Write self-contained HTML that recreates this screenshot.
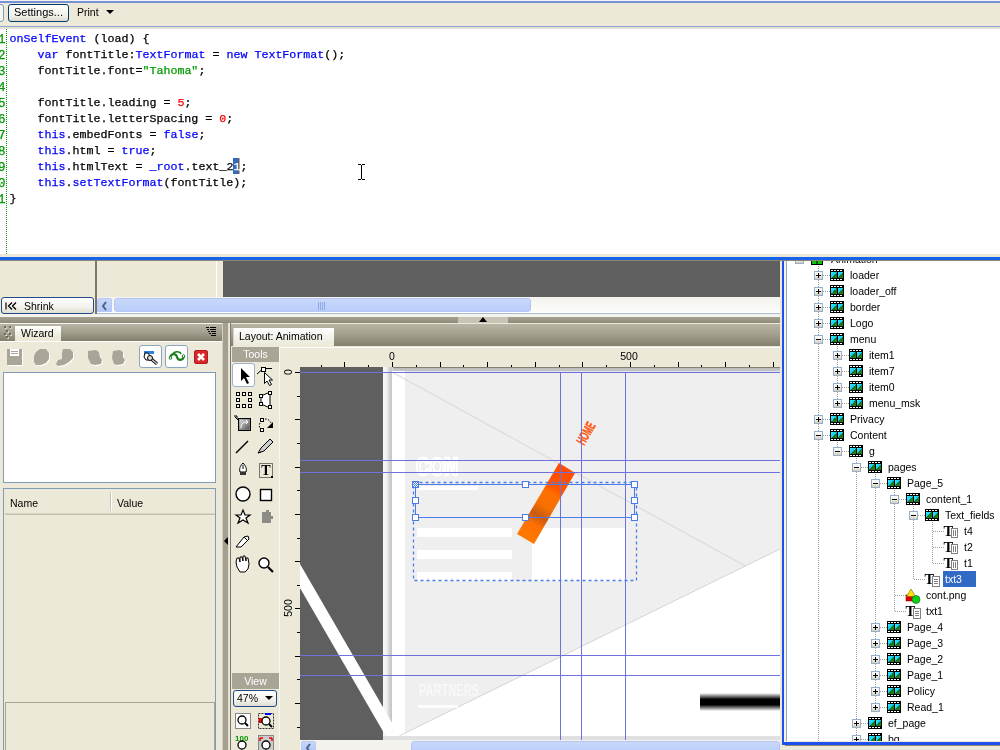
<!DOCTYPE html>
<html><head><meta charset="utf-8">
<style>
*{margin:0;padding:0;box-sizing:border-box}
html,body{width:1000px;height:750px;overflow:hidden;background:#ECE9D8;font-family:"Liberation Sans",sans-serif;font-size:10.5px;color:#000}
.a{position:absolute}
#code{font-family:"Liberation Mono",monospace;font-size:11.67px;line-height:16px;white-space:pre;-webkit-text-stroke:0.25px currentColor}
.k{color:#0000FF}.s{color:#009900}.n{color:#FF0000}
.ln{color:#009900}
</style></head><body><div id="wrap" style="position:absolute;left:0;top:0;width:1000px;height:750px;will-change:transform">
<!-- top toolbar -->
<div class="a" style="left:0;top:0;width:1000px;height:1px;background:#F4F3EE"></div>
<div class="a" style="left:0;top:1px;width:1000px;height:2px;background:#7592D8"></div>
<div class="a" style="left:0;top:3px;width:1000px;height:23px;background:#ECE9D8"></div>
<div class="a" style="left:-10px;top:4px;width:14px;height:18px;border:1px solid #7F9DB9;border-radius:3px;background:#F6F5F0"></div>
<div class="a" style="left:8px;top:4px;width:61px;height:18px;border:1px solid #003C74;border-radius:3px;background:linear-gradient(#FFFFFF,#F0EFE8 70%,#DCD9CC);font-size:11px;line-height:15px;text-align:center">Settings...</div>
<div class="a" style="left:77px;top:5px;font-size:10.5px;line-height:15px">Print</div>
<div class="a" style="left:106px;top:10px;width:0;height:0;border-left:4px solid transparent;border-right:4px solid transparent;border-top:4px solid #000"></div>
<div class="a" style="left:0;top:26px;width:1000px;height:1px;background:#8FA5D0"></div>
<div class="a" style="left:0;top:27px;width:1000px;height:2px;background:#E4E2D8"></div>
<!-- code area -->
<div class="a" style="left:0;top:29px;width:1000px;height:225px;background:#FFFFFF"></div>
<div class="a" style="left:6px;top:29px;width:1px;height:225px;background-image:linear-gradient(#009900 50%,transparent 50%);background-size:1px 2px"></div>
<div class="a ln" id="code" style="left:-2px;top:32px;color:#009900;font-size:12.5px">1
2
3
4
5
6
7
8
9
0
1</div>
<div class="a" style="left:233px;top:158px;width:6px;height:16px;background:#316AC5"></div><div class="a" style="left:239px;top:158px;width:1px;height:16px;background:#E8A040"></div>
<div class="a" id="code" style="left:9.5px;top:30.5px"><span class="k">onSelfEvent</span> (load) {
    <span class="k">var</span> fontTitle:<span class="k">TextFormat</span> = <span class="k">new</span> <span class="k">TextFormat</span>();
    fontTitle.font=<span class="s">"Tahoma"</span>;

    fontTitle.leading = <span class="n">5</span>;
    fontTitle.letterSpacing = <span class="n">0</span>;
    <span class="k">this</span>.embedFonts = <span class="k">false</span>;
    <span class="k">this</span>.html = <span class="k">true</span>;
    <span class="k">this</span>.htmlText = <span class="k">_root</span>.text_2<span style="color:#fff">1</span>;
    <span class="k">this</span>.<span class="k">setTextFormat</span>(fontTitle);
}</div>
<svg class="a" style="left:356px;top:162px" width="12" height="20"><path d="M2 2.5h3M6 2.5h3M2 17.5h3M6 17.5h3" stroke="#000"/><path d="M5.5 3V17" stroke="#000"/></svg>
<!-- splitter between code and panels -->
<div class="a" style="left:0;top:254px;width:1000px;height:3px;background:#ECE9D8"></div>
<div class="a" style="left:0;top:257px;width:1000px;height:3px;background:#1662EA"></div>
<div class="a" style="left:0;top:260px;width:1000px;height:1px;background:#8C8878"></div>

<!-- mid strip -->
<div class="a" style="left:0;top:261px;width:95px;height:55px;background:#ECE9D8"></div>
<div class="a" style="left:95px;top:261px;width:2px;height:55px;background:#7A776B"></div>
<div class="a" style="left:216px;top:261px;width:1px;height:36px;background:#FFFFFF"></div>
<div class="a" style="left:223px;top:261px;width:557px;height:36px;background:#5F5F5F"></div>
<div class="a" style="left:97px;top:297px;width:683px;height:17px;background:linear-gradient(#F3F2EC,#FDFDFB)"></div>
<div class="a" style="left:1px;top:297px;width:93px;height:17px;border:1px solid #1F4C88;border-radius:3px;background:linear-gradient(#FFFFFF,#F3F2EC 60%,#E0DED2)"></div>
<svg class="a" style="left:5px;top:302px" width="14" height="8"><path d="M1 0.5V7.5" stroke="#000" stroke-width="1.2"/><path d="M7 0.5L3.5 4L7 7.5M11 0.5L7.5 4L11 7.5" stroke="#000" stroke-width="1.3" fill="none"/></svg>
<div class="a" style="left:24px;top:299px;font-size:10.5px;line-height:14px">Shrink</div>
<div class="a" style="left:97px;top:298px;width:15px;height:15px;border:1px solid #B7C8F4;border-radius:2px;background:linear-gradient(#C8D7FB,#B1C7F7)"></div>
<svg class="a" style="left:100px;top:301px" width="10" height="10"><path d="M6 1 L3 5 L6 9" stroke="#4D6185" stroke-width="2" fill="none"/></svg>
<div class="a" style="left:114px;top:298px;width:417px;height:14px;border:1px solid #B4C6F4;border-radius:3px;background:linear-gradient(#C9D8FC,#B9CDF9)"></div>
<svg class="a" style="left:318px;top:302px" width="8" height="8"><path d="M0.5 0V8M2.5 0V8M4.5 0V8M6.5 0V8" stroke="#8FA8E8" stroke-width="1"/></svg>
<div class="a" style="left:97px;top:312px;width:683px;height:1px;background:#FFFFFF"></div><div class="a" style="left:97px;top:313px;width:683px;height:1px;background:#A9B9D8"></div><div class="a" style="left:0;top:314px;width:780px;height:3px;background:#F4F3EE"></div>
<div class="a" style="left:0;top:317px;width:780px;height:6px;background:linear-gradient(#A5A190,#8F8B7A)"></div>
<div class="a" style="left:458px;top:317px;width:50px;height:6px;background:#C7C4B5"></div>
<div class="a" style="left:479px;top:317px;width:0;height:0;border-left:4px solid transparent;border-right:4px solid transparent;border-bottom:5px solid #000"></div>
<div class="a" style="left:0;top:323px;width:780px;height:1px;background:#F4F3EE"></div>

<!-- wizard panel -->
<div class="a" style="left:0;top:324px;width:222px;height:17px;background:linear-gradient(#B9B5A5,#A29E8D 50%,#837F6D)"></div>
<svg class="a" style="left:3px;top:326px" width="11" height="14"><g fill="#D8D5C8"><rect x="2" y="1" width="2" height="2"/><rect x="7" y="1" width="2" height="2"/><rect x="4" y="5" width="2" height="2"/><rect x="2" y="8" width="2" height="2"/><rect x="7" y="8" width="2" height="2"/><rect x="4" y="11" width="2" height="2"/></g><g fill="#6E6B5E"><rect x="1" y="0" width="2" height="2"/><rect x="6" y="0" width="2" height="2"/><rect x="3" y="4" width="2" height="2"/><rect x="1" y="7" width="2" height="2"/><rect x="6" y="7" width="2" height="2"/><rect x="3" y="10" width="2" height="2"/></g></svg>
<div class="a" style="left:15px;top:326px;width:46px;height:16px;background:linear-gradient(#FFFFFF,#ECE9D8 70%);font-size:10.5px;line-height:14px;padding-left:6px">Wizard</div>
<svg class="a" style="left:206px;top:327px" width="11" height="10"><g fill="#000"><rect x="0" y="0" width="3" height="1"/><rect x="4" y="0" width="6" height="1"/><rect x="1" y="2" width="2" height="1"/><rect x="4" y="2" width="6" height="1"/><rect x="2" y="4" width="2" height="1"/><rect x="5" y="4" width="5" height="1"/><rect x="3" y="6" width="2" height="1"/><rect x="6" y="6" width="4" height="1"/><rect x="5" y="8" width="5" height="1"/></g></svg>
<div class="a" style="left:0;top:341px;width:222px;height:1px;background:#FFFFFF"></div>
<!-- wizard toolbar icons (disabled) -->
<svg class="a" style="left:6px;top:348px" width="122" height="19">
<g fill="#FFFFFF" transform="translate(1,1)">
<path d="M1 1h15v16h-15z"/>
<path d="M30 4l4-3 6 0 3 4 0 6-3 4-5 2-5 0-2-3 0-6z"/>
<path d="M57 1l7 0 3 3 0 6-4 4-5 3-6 1-2-2 2-4 4-1 0-6z"/>
<path d="M82 3l8-1 3 2 1 5 2 3-1 4-6 1-4-1-3-6z"/>
<path d="M107 3l7-1 3 2 0 5 2 3-2 4-6 1-3-1-2-6z"/>
</g>
<g fill="#A8A698">
<path d="M1 1h15v16h-15z"/>
<path d="M30 4l4-3 6 0 3 4 0 6-3 4-5 2-5 0-2-3 0-6z"/>
<path d="M57 1l7 0 3 3 0 6-4 4-5 3-6 1-2-2 2-4 4-1 0-6z"/>
<path d="M82 3l8-1 3 2 1 5 2 3-1 4-6 1-4-1-3-6z"/>
<path d="M107 3l7-1 3 2 0 5 2 3-2 4-6 1-3-1-2-6z"/>
</g>
<rect x="4" y="1" width="9" height="7" fill="#FFFFFF"/><path d="M5 3.5h7M5 5.5h7" stroke="#A8A698" stroke-width="1"/></svg>
<div class="a" style="left:139px;top:345px;width:23px;height:23px;border:1px solid #8CA4C4;border-radius:3px;background:#FFFFFF"></div>
<svg class="a" style="left:142px;top:349px" width="18" height="16"><path d="M2 2h10v3h-10z" fill="#2F7FDF"/><path d="M3 4l3 0 2 3-1 4-3 0-2-3z" fill="#fff" stroke="#000" stroke-width="1"/><path d="M7 8l8 7" stroke="#000" stroke-width="3"/><path d="M7 8l8 7" stroke="#C8C8C8" stroke-width="1.5"/><circle cx="8" cy="9" r="2.5" fill="#ddd" stroke="#000"/></svg>
<div class="a" style="left:165px;top:345px;width:23px;height:23px;border:1px solid #8CA4C4;border-radius:3px;background:#FFFFFF"></div>
<svg class="a" style="left:168px;top:349px" width="18" height="16"><path d="M2 9 C3 4, 8 4, 9 8 C10 12, 15 12, 16 7" stroke="#1F7F1F" stroke-width="2.2" fill="none"/><path d="M5 5 C6 2, 12 2, 13 5" stroke="#1F7F1F" stroke-width="1.5" fill="none"/><circle cx="2.5" cy="9" r="1.3" fill="#fff" stroke="#1F7F1F"/><circle cx="15.5" cy="7" r="1.3" fill="#fff" stroke="#1F7F1F"/></svg>
<div class="a" style="left:194px;top:350px;width:14px;height:14px;background:#D8262A;border:1px solid #B01A1A;border-radius:2px"></div>
<svg class="a" style="left:194px;top:350px" width="14" height="14"><path d="M4 4L10 10M10 4L4 10" stroke="#fff" stroke-width="2.6"/></svg>
<div class="a" style="left:3px;top:372px;width:213px;height:111px;background:#FFFFFF;border:1px solid #7F9DB9"></div>
<div class="a" style="left:3px;top:488px;width:213px;height:270px;background:#ECE9D8;border:1px solid #7F9DB9"></div>
<div class="a" style="left:5px;top:490px;width:210px;height:23px;background:#ECE9D8"></div>
<div class="a" style="left:5px;top:513px;width:210px;height:1px;background:#D6D2C2"></div>
<div class="a" style="left:5px;top:514px;width:210px;height:1px;background:#C5C1B0"></div>
<div class="a" style="left:110px;top:492px;width:1px;height:19px;background:#C9C5B4"></div>
<div class="a" style="left:111px;top:492px;width:1px;height:19px;background:#FFFFFF"></div>
<div class="a" style="left:10px;top:496px;font-size:10.5px;line-height:14px">Name</div>
<div class="a" style="left:117px;top:496px;font-size:10.5px;line-height:14px">Value</div>
<div class="a" style="left:5px;top:702px;width:210px;height:60px;border:1px solid #A9A690;background:#ECE9D8"></div>
<!-- splitter -->
<div class="a" style="left:222px;top:323px;width:1px;height:427px;background:#D2CEC0"></div>
<div class="a" style="left:223px;top:323px;width:5px;height:427px;background:#A59F90"></div>
<div class="a" style="left:228px;top:323px;width:1px;height:427px;background:#E2DFD3"></div>
<div class="a" style="left:224px;top:537px;width:0;height:0;border-top:4px solid transparent;border-bottom:4px solid transparent;border-right:4px solid #000"></div>

<!-- layout panel -->
<div class="a" style="left:229px;top:323px;width:551px;height:427px;background:#ECE9D8"></div>
<div class="a" style="left:230px;top:323px;width:1px;height:427px;background:#7B7869"></div>
<div class="a" style="left:231px;top:324px;width:549px;height:22px;background:linear-gradient(#B9B5A5,#A29E8D 50%,#837F6D)"></div>
<div class="a" style="left:233px;top:328px;width:101px;height:18px;background:linear-gradient(#FFFFFF,#F1EFE6 60%,#ECE9D8);font-size:10.5px;line-height:16px;padding-left:5px;border-left:1px solid #D8D5C8">Layout: Animation</div>
<div class="a" style="left:231px;top:346px;width:549px;height:1px;background:#ECE9D8"></div>
<div class="a" style="left:232px;top:347px;width:47px;height:15px;background:#A8A595;color:#FFFFFF;font-size:10.5px;line-height:15px;text-align:center">Tools</div>
<div class="a" style="left:279px;top:347px;width:1px;height:403px;background:#F8F7F3"></div>
<div class="a" style="left:232px;top:363px;width:23px;height:24px;background:#FFFFFF;border:1px solid #9DB0CC;border-radius:3px"></div>
<svg class="a" style="left:232px;top:362px" width="48" height="216">
<!-- select arrow -->
<path d="M9 6 L9 19 L12 16 L15 22 L17 21 L14 15 L18 15 Z" fill="#000"/>
<!-- subselect -->
<rect x="29.5" y="5.5" width="4" height="4" fill="#fff" stroke="#000"/><path d="M25 12L29.5 8M33.5 6.5H40" stroke="#000"/>
<path d="M32.5 10.5 L32.5 21.5 L35 19 L37.5 23.5 L39.5 22.5 L37 18 L40.5 18 Z" fill="#fff" stroke="#000" stroke-width="1"/>
<!-- freetransform dotted rect -->
<g fill="#fff" stroke="#000" stroke-width="1"><rect x="4.5" y="30.5" width="3" height="3"/><rect x="10.5" y="30.5" width="3" height="3"/><rect x="16.5" y="30.5" width="3" height="3"/><rect x="4.5" y="36.5" width="3" height="3"/><rect x="16.5" y="36.5" width="3" height="3"/><rect x="4.5" y="42.5" width="3" height="3"/><rect x="10.5" y="42.5" width="3" height="3"/><rect x="16.5" y="42.5" width="3" height="3"/></g>
<!-- distort -->
<path d="M29 34 L38 30 L38 46 L29 42 Z" fill="#fff" stroke="#000"/>
<g fill="#fff" stroke="#000"><rect x="27.5" y="32.5" width="3" height="3"/><rect x="27.5" y="40.5" width="3" height="3"/><rect x="36.5" y="29.5" width="3" height="3"/><rect x="36.5" y="43.5" width="3" height="3"/></g>
<!-- scale -->
<path d="M3 55 L6 58" stroke="#000"/><path d="M2 54h3v3" fill="none" stroke="#000"/>
<rect x="6.5" y="56.5" width="12" height="12" fill="#888" stroke="#000"/><rect x="7.5" y="57.5" width="10" height="10" fill="url(#g1)"/>
<path d="M9 66 C9 61, 12 60, 15 60" stroke="#fff" fill="none"/><path d="M14 58l2 2-2 2" stroke="#fff" fill="none"/>
<defs><linearGradient id="g1" x1="0" y1="0" x2="1" y2="1"><stop offset="0" stop-color="#ddd"/><stop offset="1" stop-color="#555"/></linearGradient></defs>
<!-- rotate -->
<rect x="28.5" y="56.5" width="3" height="3" fill="#fff" stroke="#000"/><rect x="28.5" y="66.5" width="3" height="3" fill="#fff" stroke="#000"/>
<path d="M33 57 C37 57, 38 59, 39 61" stroke="#000" stroke-dasharray="1.5 1.5" fill="none"/><path d="M28 61 C27 63, 27 65, 28 66" stroke="#000" stroke-dasharray="1.5 1.5" fill="none"/><path d="M35 66 L41 60 L41 66 Z" fill="#000"/>
<!-- line -->
<path d="M4 91 L16 79" stroke="#000" stroke-width="1.5"/>
<!-- pencil -->
<path d="M26 91 L29 86 L38 77 L41 80 L32 89 Z" fill="#ccc" stroke="#000"/><path d="M26 91l3-1" stroke="#000"/>
<!-- pen -->
<path d="M11 101 C14 104, 15 107, 14 110 L8 110 C7 107, 8 104, 11 101 Z" fill="#fff" stroke="#000"/><rect x="8" y="110" width="6" height="3" fill="#333"/><path d="M11 103v4" stroke="#000"/>
<!-- text -->
<rect x="27.5" y="101.5" width="13" height="14" fill="none" stroke="#000" stroke-dasharray="1 1"/>
<text x="34" y="113" font-family="Liberation Serif" font-weight="bold" font-size="14" text-anchor="middle">T</text>
<rect x="39" y="114" width="2" height="2" fill="#000"/>
<!-- circle -->
<circle cx="11" cy="132" r="7" fill="#fff" stroke="#000" stroke-width="1.4"/>
<!-- square -->
<rect x="28.5" y="127.5" width="11" height="11" fill="#fff" stroke="#000" stroke-width="1.4"/>
<!-- star -->
<path d="M11 148 L13 153 L18 153 L14 156 L16 161 L11 158 L6 161 L8 156 L4 153 L9 153 Z" fill="#fff" stroke="#000" stroke-width="1.2"/>
<!-- puzzle -->
<path d="M30 150h4v-2h3v2h2v4h2v3h-2v4h-9z" fill="#8C8B85"/>
<!-- knife -->
<path d="M4 185 L12 175 L16 174 L17 177 L9 185 Z" fill="#fff" stroke="#000"/><path d="M12 175 L16 179" stroke="#000"/>
<!-- hand -->
<path d="M5 205 L4 200 L5 196 L7 196 L8 200 L8 195 L10 195 L11 199 L11 194 L13 194 L14 199 L14 196 L16 196 L17 202 L16 207 L13 210 L8 210 Z" fill="#fff" stroke="#000"/>
<!-- magnifier -->
<circle cx="32" cy="201" r="5" fill="#fff" stroke="#000" stroke-width="1.4"/><path d="M36 205 L41 210" stroke="#000" stroke-width="2.2"/>
</svg>
<!-- view section -->
<div class="a" style="left:232px;top:673px;width:47px;height:16px;background:#A8A595;color:#FFFFFF;font-size:10.5px;line-height:16px;text-align:center">View</div>
<div class="a" style="left:233px;top:690px;width:44px;height:17px;border:1px solid #1F4C88;border-radius:3px;background:linear-gradient(#FFFFFF,#F3F2EC 60%,#E0DED2);font-size:10.5px;line-height:15px;padding-left:3px">47%</div>
<div class="a" style="left:265px;top:696px;width:0;height:0;border-left:4px solid transparent;border-right:4px solid transparent;border-top:4px solid #000"></div>
<svg class="a" style="left:232px;top:710px" width="48" height="40">
<rect x="3.5" y="3.5" width="15" height="15" fill="#fff" stroke="#888"/><circle cx="10" cy="10" r="4" fill="#fff" stroke="#000" stroke-width="1.3"/><path d="M13 13 L16 16" stroke="#000" stroke-width="2"/>
<rect x="26.5" y="3.5" width="15" height="15" fill="none" stroke="#333" stroke-dasharray="2 1"/><rect x="27" y="8" width="6" height="5" fill="#E00"/><path d="M33 4h6" stroke="#00F" stroke-width="2"/><circle cx="34" cy="11" r="4" fill="#fff" stroke="#000" stroke-width="1.3"/><path d="M37 14 L40 17" stroke="#000" stroke-width="2"/>
<text x="3" y="31" font-family="Liberation Sans" font-weight="bold" font-size="8" fill="#090">100</text><circle cx="10" cy="35" r="4" fill="#fff" stroke="#000" stroke-width="1.3"/>
<rect x="26.5" y="25.5" width="15" height="15" fill="#ccc" stroke="#888"/><path d="M28 28l3 0M28 28l0 3M40 28l-3 0M40 28l0 3" stroke="#E00" stroke-width="1.5"/><circle cx="34" cy="35" r="4" fill="#fff" stroke="#000" stroke-width="1.3"/>
</svg>

<!-- rulers -->
<div class="a" style="left:280px;top:347px;width:500px;height:21px;background:#ECE9D8"></div><div class="a" style="left:280px;top:347px;width:500px;height:1px;background:#FFFFFF"></div>
<svg class="a" style="left:280px;top:347px" width="500" height="22"><path d="M41.5 18V21" stroke="#000"/><path d="M64.5 15V21" stroke="#000"/><path d="M88.5 18V21" stroke="#000"/><path d="M112.5 15V21" stroke="#000"/><path d="M136.5 18V21" stroke="#000"/><path d="M160.5 15V21" stroke="#000"/><path d="M183.5 18V21" stroke="#000"/><path d="M207.5 15V21" stroke="#000"/><path d="M231.5 18V21" stroke="#000"/><path d="M255.5 15V21" stroke="#000"/><path d="M279.5 18V21" stroke="#000"/><path d="M302.5 15V21" stroke="#000"/><path d="M326.5 18V21" stroke="#000"/><path d="M350.5 15V21" stroke="#000"/><path d="M374.5 18V21" stroke="#000"/><path d="M398.5 15V21" stroke="#000"/><path d="M421.5 18V21" stroke="#000"/><path d="M445.5 15V21" stroke="#000"/><path d="M469.5 18V21" stroke="#000"/><path d="M493.5 15V21" stroke="#000"/>
<text x="112" y="13" font-family="Liberation Sans" font-size="10.5" text-anchor="middle">0</text>
<text x="349" y="13" font-family="Liberation Sans" font-size="10.5" text-anchor="middle">500</text></svg>
<svg class="a" style="left:280px;top:368px" width="20" height="372"><path d="M15 4.5H20" stroke="#000"/><path d="M17 28.5H20" stroke="#000"/><path d="M15 51.5H20" stroke="#000"/><path d="M17 75.5H20" stroke="#000"/><path d="M15 99.5H20" stroke="#000"/><path d="M17 122.5H20" stroke="#000"/><path d="M15 146.5H20" stroke="#000"/><path d="M17 170.5H20" stroke="#000"/><path d="M15 193.5H20" stroke="#000"/><path d="M17 217.5H20" stroke="#000"/><path d="M15 240.5H20" stroke="#000"/><path d="M17 264.5H20" stroke="#000"/><path d="M15 288.5H20" stroke="#000"/><path d="M17 311.5H20" stroke="#000"/><path d="M15 335.5H20" stroke="#000"/><path d="M17 359.5H20" stroke="#000"/>
<text transform="translate(12,4) rotate(-90)" font-family="Liberation Sans" font-size="10.5" text-anchor="middle">0</text>
<text transform="translate(12,240) rotate(-90)" font-family="Liberation Sans" font-size="10.5" text-anchor="middle">500</text></svg>
<!-- canvas -->
<svg class="a" style="left:300px;top:367px" width="480" height="374">
<rect x="0" y="0" width="480" height="374" fill="#5F5F5F"/>
<rect x="83" y="0" width="397" height="372" fill="#EFEFEF"/>
<rect x="83" y="0" width="397" height="5" fill="url(#st)"/><rect x="83" y="0" width="397" height="1" fill="#857D6D"/>
<defs><linearGradient id="se" x1="0" y1="0" x2="1" y2="0"><stop offset="0" stop-color="#F6F6F6"/><stop offset="0.4" stop-color="#F0F0F0"/><stop offset="0.55" stop-color="#DADADA"/><stop offset="0.85" stop-color="#C6C6C6"/><stop offset="1" stop-color="#E4E4E4"/></linearGradient>
<linearGradient id="st" x1="0" y1="0" x2="0" y2="1"><stop offset="0" stop-color="#B8B8B8"/><stop offset="0.7" stop-color="#C4C4C4"/><stop offset="1" stop-color="#F4F4F4"/></linearGradient></defs>
<rect x="83" y="0" width="10" height="372" fill="url(#se)"/>
<rect x="92" y="4" width="13" height="366" fill="#FFFFFF"/>
<path d="M92 5 L480 218" stroke="#DCDCDC" stroke-width="1.2"/>
<path d="M97 370 L480 182 L480 370 Z" fill="#FFFFFF"/><path d="M97 370 L480 182" stroke="#D4D4D4" stroke-width="1"/>
<path d="M0 197 L102 373 L88 373 L0 221 Z" fill="#FFFFFF"/>
<rect x="83" y="369" width="397" height="4" fill="#E0E0E0"/>
<!-- white rects -->
<rect x="117" y="161" width="95" height="9" fill="#FFFFFF"/>
<rect x="117" y="183" width="95" height="9" fill="#FFFFFF"/>
<rect x="117" y="205" width="95" height="9" fill="#FFFFFF"/>
<rect x="232" y="161" width="93" height="53" fill="#FFFFFF"/>
<!-- CON text -->
<text x="116" y="108" font-family="Liberation Sans" font-weight="bold" font-size="23" fill="#E2E2E2" stroke="#FFFFFF" stroke-width="2.4" textLength="42" lengthAdjust="spacingAndGlyphs">CON</text>
<rect x="118" y="119" width="60" height="4" fill="#FFFFFF" opacity="0.9"/>
<!-- black bar -->
<defs><linearGradient id="bb" x1="0" y1="0" x2="0" y2="1"><stop offset="0" stop-color="#fff"/><stop offset="0.35" stop-color="#000"/><stop offset="0.65" stop-color="#000"/><stop offset="1" stop-color="#fff"/></linearGradient>
<pattern id="hatch" width="2" height="2" patternUnits="userSpaceOnUse"><rect width="2" height="2" fill="#fff"/><rect width="1" height="1" fill="#4A7BEA"/><rect x="1" y="1" width="1" height="1" fill="#4A7BEA"/></pattern>
<linearGradient id="ob" x1="0" y1="0" x2="1" y2="0"><stop offset="0" stop-color="#FF6A00"/><stop offset="1" stop-color="#FF4A00"/></linearGradient></defs>
<rect x="400" y="326" width="80" height="18" fill="url(#bb)"/>
<!-- orange bar -->
<defs><linearGradient id="obar" gradientUnits="userSpaceOnUse" x1="267" y1="99" x2="225" y2="172"><stop offset="0" stop-color="#FF4A00"/><stop offset="0.3" stop-color="#FF5500"/><stop offset="0.38" stop-color="#FF7000"/><stop offset="0.55" stop-color="#F57000"/><stop offset="0.68" stop-color="#C85A10"/><stop offset="0.8" stop-color="#FF7000"/><stop offset="1" stop-color="#FF7A00"/></linearGradient></defs>
<path d="M259 96 L275 106 L234 177 L217 167 Z" fill="url(#obar)"/>
<text transform="translate(284,79) rotate(-60) scale(0.72,1.25)" font-family="Liberation Sans" font-weight="bold" font-size="11" fill="#FF5A1A" stroke="#FF5A1A" stroke-width="0.4">HOME</text>
<!-- PARTNERS text -->
<text x="119" y="329" font-family="Liberation Sans" font-weight="bold" font-size="16" fill="#F8F8F8" stroke="none" textLength="60" lengthAdjust="spacingAndGlyphs">PARTNERS</text>
<rect x="118" y="338" width="40" height="3" fill="#FFFFFF" opacity="0.8"/>
<!-- guides -->
<g stroke="#6D72E0" stroke-width="1"><path d="M0 5.5H480M0 93.5H480M0 105.5H480M0 288.5H480M0 308.5H480"/>
<path d="M260.5 5V374M281.5 5V374M325.5 5V374"/></g>
<!-- selection -->
<rect x="113.5" y="115.5" width="223" height="98" fill="none" stroke="#4A7BEA" stroke-width="1.3" stroke-dasharray="3 3"/>
<rect x="115.5" y="117.5" width="219" height="33" fill="none" stroke="#4A7BEA"/>
<g fill="#FFFFFF" stroke="#4A7BEA"><rect x="112.5" y="114.5" width="6" height="6" fill="url(#hatch)"/><rect x="222.5" y="114.5" width="6" height="6"/><rect x="331.5" y="114.5" width="6" height="6"/>
<rect x="112.5" y="130.5" width="6" height="6"/><rect x="331.5" y="130.5" width="6" height="6"/>
<rect x="112.5" y="147.5" width="6" height="6"/><rect x="222.5" y="147.5" width="6" height="6"/><rect x="331.5" y="147.5" width="6" height="6"/></g>
</svg>
<!-- canvas h scrollbar -->
<div class="a" style="left:300px;top:740px;width:480px;height:10px;background:#F3F2EC"></div>
<div class="a" style="left:301px;top:741px;width:15px;height:12px;border:1px solid #B7C8F4;border-radius:2px;background:linear-gradient(#C8D7FB,#B1C7F7)"></div>
<svg class="a" style="left:304px;top:743px" width="10" height="8"><path d="M6 1 L3 5 L6 9" stroke="#4D6185" stroke-width="2" fill="none"/></svg>
<div class="a" style="left:411px;top:741px;width:369px;height:12px;border:1px solid #B4C6F4;border-radius:3px;background:linear-gradient(#C9D8FC,#B9CDF9)"></div>

<!-- tree panel -->
<div class="a" style="left:780px;top:261px;width:220px;height:489px;background:#ECE9D8"></div>
<div class="a" style="left:782px;top:261px;width:2px;height:484px;background:#1F50EE"></div><div class="a" style="left:784px;top:261px;width:2px;height:481px;background:#F4F3EE"></div>
<div class="a" style="left:782px;top:742px;width:218px;height:3px;background:#1F50EE"></div>
<div class="a" style="left:786px;top:261px;width:1px;height:480px;background:#8FA5C6"></div>
<div class="a" style="left:787px;top:261px;width:213px;height:480px;background:#FFFFFF"></div>
<div class="a" style="left:785px;top:745px;width:215px;height:1px;background:#8C8878"></div>
<svg class="a" style="left:780px;top:250px;clip-path:inset(11px 0 9px 7px)" width="220" height="500" font-family="Liberation Sans" font-size="10.5">
<style>.dl{stroke:#A0A0A0;stroke-dasharray:1 1;fill:none}</style>
<defs>
<linearGradient id="bxg" x1="0" y1="0" x2="0" y2="1"><stop offset="0" stop-color="#FFFFFF"/><stop offset="0.5" stop-color="#F2F0E8"/><stop offset="1" stop-color="#CFC8B4"/></linearGradient>
<linearGradient id="fg" x1="0" y1="0" x2="1" y2="1"><stop offset="0" stop-color="#40F0FF"/><stop offset="0.5" stop-color="#10C8F0"/><stop offset="0.5" stop-color="#1A6A20"/><stop offset="1" stop-color="#2A8A10"/></linearGradient>
<g id="bx"><rect x="0.5" y="0.5" width="8" height="8" fill="url(#bxg)" stroke="#98AFCC"/></g>
<g id="scene"><rect x="0" y="0" width="12" height="12" fill="#000"/><rect x="1" y="1" width="10" height="10" fill="#10C010"/><path d="M6 1v10" stroke="#000"/></g>
<g id="film"><rect x="0" y="0" width="14" height="12" fill="#000"/>
<g fill="#FFFFFF"><rect x="1" y="1" width="2" height="1"/><rect x="4" y="1" width="2" height="1"/><rect x="7" y="1" width="2" height="1"/><rect x="10" y="1" width="2" height="1"/><rect x="1" y="10" width="2" height="1"/><rect x="4" y="10" width="2" height="1"/><rect x="7" y="10" width="2" height="1"/><rect x="10" y="10" width="2" height="1"/></g>
<rect x="1" y="3" width="6" height="6" fill="url(#fg)"/><rect x="8" y="3" width="5" height="6" fill="url(#fg)"/></g>
<g id="tin"><text x="-0.5" y="10.5" font-family="Liberation Serif" font-weight="bold" font-size="14.5" fill="#000">T</text><rect x="7.5" y="3.5" width="6" height="9" fill="#fff" stroke="#808080"/><path d="M9.5 5v6M11.5 5v6" stroke="#808080"/></g>
<g id="tdyn"><text x="-0.5" y="10.5" font-family="Liberation Serif" font-weight="bold" font-size="14.5" fill="#000">T</text><rect x="7.5" y="3.5" width="7" height="10" fill="#fff" stroke="#808080"/><path d="M9 6.5h4M9 8.5h4M9 10.5h4" stroke="#808080"/></g>
<g id="bmp"><rect x="0" y="6" width="7" height="6" fill="#E00000" stroke="#600" stroke-width="0.5"/><path d="M5 0 L9.5 7.5 L0.5 7.5 Z" fill="#FFE000" stroke="#806000" stroke-width="0.6"/><circle cx="10" cy="10.5" r="4" fill="#10D010" stroke="#064" stroke-width="0.6"/></g>
</defs>
<path d="M38.5 0V510" class="dl"/><path d="M57.5 94V153" class="dl"/><path d="M57.5 190V201" class="dl"/><path d="M76.5 206V510" class="dl"/><path d="M95.5 222V457" class="dl"/><path d="M114.5 238V361" class="dl"/><path d="M133.5 254V329" class="dl"/><path d="M152.5 270V313" class="dl"/><path d="M24 9.5H31" class="dl"/><use href="#bx" x="15" y="5"/><path d="M17 9.5H22" stroke="#000"/><use href="#scene" x="31" y="3"/><text x="51" y="13">Animation</text><path d="M43 25.5H50" class="dl"/><use href="#bx" x="34" y="21"/><path d="M36 25.5H41" stroke="#000"/><path d="M38.5 23V28" stroke="#000"/><use href="#film" x="50" y="19"/><text x="70" y="29">loader</text><path d="M43 41.5H50" class="dl"/><use href="#bx" x="34" y="37"/><path d="M36 41.5H41" stroke="#000"/><path d="M38.5 39V44" stroke="#000"/><use href="#film" x="50" y="35"/><text x="70" y="45">loader_off</text><path d="M43 57.5H50" class="dl"/><use href="#bx" x="34" y="53"/><path d="M36 57.5H41" stroke="#000"/><path d="M38.5 55V60" stroke="#000"/><use href="#film" x="50" y="51"/><text x="70" y="61">border</text><path d="M43 73.5H50" class="dl"/><use href="#bx" x="34" y="69"/><path d="M36 73.5H41" stroke="#000"/><path d="M38.5 71V76" stroke="#000"/><use href="#film" x="50" y="67"/><text x="70" y="77">Logo</text><path d="M43 89.5H50" class="dl"/><use href="#bx" x="34" y="85"/><path d="M36 89.5H41" stroke="#000"/><use href="#film" x="50" y="83"/><text x="70" y="93">menu</text><path d="M62 105.5H69" class="dl"/><use href="#bx" x="53" y="101"/><path d="M55 105.5H60" stroke="#000"/><path d="M57.5 103V108" stroke="#000"/><use href="#film" x="69" y="99"/><text x="89" y="109">item1</text><path d="M62 121.5H69" class="dl"/><use href="#bx" x="53" y="117"/><path d="M55 121.5H60" stroke="#000"/><path d="M57.5 119V124" stroke="#000"/><use href="#film" x="69" y="115"/><text x="89" y="125">item7</text><path d="M62 137.5H69" class="dl"/><use href="#bx" x="53" y="133"/><path d="M55 137.5H60" stroke="#000"/><path d="M57.5 135V140" stroke="#000"/><use href="#film" x="69" y="131"/><text x="89" y="141">item0</text><path d="M62 153.5H69" class="dl"/><use href="#bx" x="53" y="149"/><path d="M55 153.5H60" stroke="#000"/><path d="M57.5 151V156" stroke="#000"/><use href="#film" x="69" y="147"/><text x="89" y="157">menu_msk</text><path d="M43 169.5H50" class="dl"/><use href="#bx" x="34" y="165"/><path d="M36 169.5H41" stroke="#000"/><path d="M38.5 167V172" stroke="#000"/><use href="#film" x="50" y="163"/><text x="70" y="173">Privacy</text><path d="M43 185.5H50" class="dl"/><use href="#bx" x="34" y="181"/><path d="M36 185.5H41" stroke="#000"/><use href="#film" x="50" y="179"/><text x="70" y="189">Content</text><path d="M62 201.5H69" class="dl"/><use href="#bx" x="53" y="197"/><path d="M55 201.5H60" stroke="#000"/><use href="#film" x="69" y="195"/><text x="89" y="205">g</text><path d="M81 217.5H88" class="dl"/><use href="#bx" x="72" y="213"/><path d="M74 217.5H79" stroke="#000"/><use href="#film" x="88" y="211"/><text x="108" y="221">pages</text><path d="M100 233.5H107" class="dl"/><use href="#bx" x="91" y="229"/><path d="M93 233.5H98" stroke="#000"/><use href="#film" x="107" y="227"/><text x="127" y="237">Page_5</text><path d="M119 249.5H126" class="dl"/><use href="#bx" x="110" y="245"/><path d="M112 249.5H117" stroke="#000"/><use href="#film" x="126" y="243"/><text x="146" y="253">content_1</text><path d="M138 265.5H145" class="dl"/><use href="#bx" x="129" y="261"/><path d="M131 265.5H136" stroke="#000"/><use href="#film" x="145" y="259"/><text x="165" y="269">Text_fields</text><path d="M153 281.5H164" class="dl"/><use href="#tin" x="164" y="275"/><text x="184" y="285">t4</text><path d="M153 297.5H164" class="dl"/><use href="#tin" x="164" y="291"/><text x="184" y="301">t2</text><path d="M153 313.5H164" class="dl"/><use href="#tin" x="164" y="307"/><text x="184" y="317">t1</text><path d="M134 329.5H145" class="dl"/><use href="#tdyn" x="145" y="323"/><rect x="163" y="321" width="33" height="16" fill="#316AC5"/><text x="165" y="333" fill="#fff">txt3</text><path d="M115 345.5H126" class="dl"/><use href="#bmp" x="126" y="339"/><text x="146" y="349">cont.png</text><path d="M115 361.5H126" class="dl"/><use href="#tdyn" x="126" y="355"/><text x="146" y="365">txt1</text><path d="M100 377.5H107" class="dl"/><use href="#bx" x="91" y="373"/><path d="M93 377.5H98" stroke="#000"/><path d="M95.5 375V380" stroke="#000"/><use href="#film" x="107" y="371"/><text x="127" y="381">Page_4</text><path d="M100 393.5H107" class="dl"/><use href="#bx" x="91" y="389"/><path d="M93 393.5H98" stroke="#000"/><path d="M95.5 391V396" stroke="#000"/><use href="#film" x="107" y="387"/><text x="127" y="397">Page_3</text><path d="M100 409.5H107" class="dl"/><use href="#bx" x="91" y="405"/><path d="M93 409.5H98" stroke="#000"/><path d="M95.5 407V412" stroke="#000"/><use href="#film" x="107" y="403"/><text x="127" y="413">Page_2</text><path d="M100 425.5H107" class="dl"/><use href="#bx" x="91" y="421"/><path d="M93 425.5H98" stroke="#000"/><path d="M95.5 423V428" stroke="#000"/><use href="#film" x="107" y="419"/><text x="127" y="429">Page_1</text><path d="M100 441.5H107" class="dl"/><use href="#bx" x="91" y="437"/><path d="M93 441.5H98" stroke="#000"/><path d="M95.5 439V444" stroke="#000"/><use href="#film" x="107" y="435"/><text x="127" y="445">Policy</text><path d="M100 457.5H107" class="dl"/><use href="#bx" x="91" y="453"/><path d="M93 457.5H98" stroke="#000"/><path d="M95.5 455V460" stroke="#000"/><use href="#film" x="107" y="451"/><text x="127" y="461">Read_1</text><path d="M81 473.5H88" class="dl"/><use href="#bx" x="72" y="469"/><path d="M74 473.5H79" stroke="#000"/><path d="M76.5 471V476" stroke="#000"/><use href="#film" x="88" y="467"/><text x="108" y="477">ef_page</text><path d="M81 489.5H88" class="dl"/><use href="#bx" x="72" y="485"/><path d="M74 489.5H79" stroke="#000"/><path d="M76.5 487V492" stroke="#000"/><use href="#film" x="88" y="483"/><text x="108" y="493">bg</text>
</svg>
</div></body></html>
